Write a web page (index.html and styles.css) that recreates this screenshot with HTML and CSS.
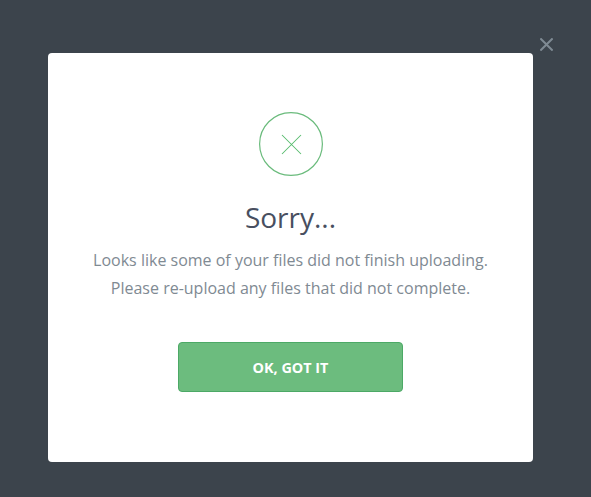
FILE: index.html
```html
<!DOCTYPE html>
<html lang="en">
<head>
<meta charset="utf-8">
<title>Upload incomplete</title>
<link rel="stylesheet" href="styles.css">
</head>
<body>
<main class="dialog" role="dialog" aria-labelledby="title">
  <button class="close" aria-label="Close"><svg viewBox="0 0 13 13" width="13" height="13"><path d="M.4.4 12.6 12.6M12.6.4.4 12.6"/></svg></button>
  <svg class="status" viewBox="0 0 64 64" width="64" height="64"><circle cx="32" cy="32" r="31.4"/><path class="cross" d="M23 23 42 42M42 23 23 42"/></svg>
  <h1 class="title" id="title">Sorry...</h1>
  <p class="message">Looks like some of your files did not finish uploading.<br>Please re-upload any files that did not complete.</p>
  <button class="confirm">OK, GOT IT</button>
</main>
</body>
</html>
```

FILE: styles.css
```css
* { box-sizing: border-box; }
body {
  margin: 0;
  padding: 53px 58px 35px 48px;
  background: #3c444c;
  font-family: "Open Sans", sans-serif;
}
.dialog {
  position: relative;
  display: flex;
  flex-direction: column;
  align-items: center;
  height: 409px;
  padding-top: 59px;
  border-radius: 4px;
  background: #fff;
}
.close {
  position: absolute;
  top: -15px;
  right: -20px;
  padding: 0;
  border: 0;
  background: none;
}
.close svg { display: block; fill: none; stroke: #7f8a93; stroke-width: 2; }
.status { fill: none; stroke: #6abb7c; stroke-width: 1.2; }
.cross { stroke: #55bb6c; stroke-width: 1.02; }
.title {
  margin: 21px 0 0;
  color: #484f60;
  font-size: 28px;
  font-weight: 400;
  line-height: 40px;
}
.message {
  margin: 9px 0 0;
  color: #7f8a93;
  font-size: 16px;
  line-height: 28px;
  text-align: center;
  white-space: nowrap;
}
.confirm {
  width: 225px;
  height: 50px;
  margin-top: 40px;
  padding: 2px 0 0;
  border: 1px solid #4ca966;
  border-radius: 4px;
  background: #6cbc7e;
  color: #fff;
  font: 700 14.4px/20px "Open Sans", sans-serif;
}
```
